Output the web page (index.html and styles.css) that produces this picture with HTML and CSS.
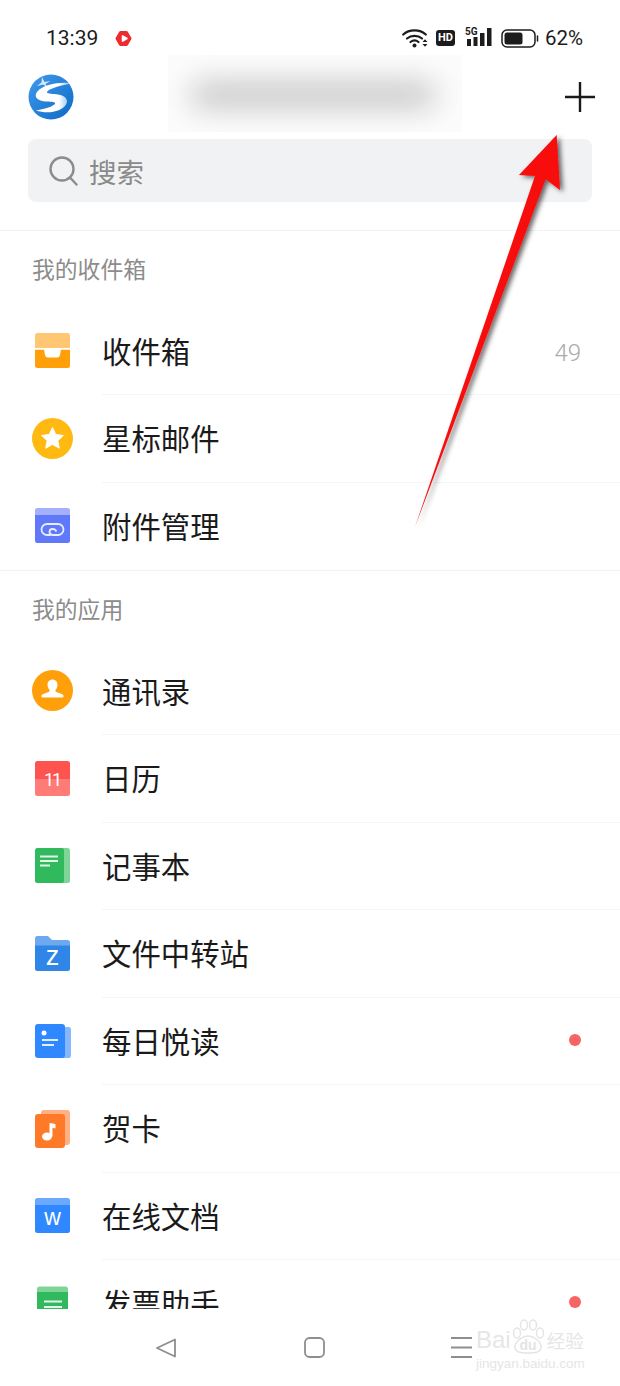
FILE: index.html

```html
<!DOCTYPE html>
<html lang="zh-CN">
<head>
    <meta charset="UTF-8">
    <meta name="viewport" content="width=device-width, initial-scale=1.0">
    <title>邮箱</title>
    <link rel="stylesheet" href="styles.css">
</head>
<body>
    <div class="page">
        <div class="status-bar">
            <span class="time">13:39</span>
            <svg class="status-video" width="17" height="17" viewBox="0 0 17 17">
                <path d="M5.500 2.500h6l3.500 6-3.500 6h-6L2 8.500z" fill="#ee2b2f" stroke="#ee2b2f" stroke-width="3" stroke-linejoin="round"/>
                <path d="M7.500 5.800l4.500 2.700-4.500 2.700z" fill="#fff" stroke="#fff" stroke-width="1.500" stroke-linejoin="round"/>
            </svg>
            <div class="status-right">
                <svg width="26" height="20" viewBox="0 0 26 20">
                    <path d="M1.200 6.500C7 1 18 1 23.800 6.500M5 10.500C9 7 16 7 20 10.500M8.500 14c2.500-2 5.500-2 8 0" fill="none" stroke="#1c1c1c" stroke-width="2.200" stroke-linecap="round"/>
                    <circle cx="12.500" cy="17.500" r="2" fill="#1c1c1c"/>
                    <path d="M20.500 14l2.500-2.800 2.500 2.800zM20.500 16l2.500 2.800 2.500-2.800z" fill="#1c1c1c"/>
                </svg>
                <span class="hd">HD</span>
                <div class="signal">
                    <span class="signal-5g">5G</span>
                    <svg class="signal-bars" width="27" height="19" viewBox="0 0 27 19">
                        <rect x="2" y="11" width="4" height="7" fill="#1c1c1c"/>
                        <rect x="8.500" y="9" width="4" height="9" fill="#1c1c1c"/>
                        <rect x="15" y="5" width="4.500" height="13" fill="#1c1c1c"/>
                        <rect x="22" y="0" width="4.500" height="18" fill="#1c1c1c"/>
                    </svg>
                </div>
                <svg class="battery" width="38" height="19" viewBox="0 0 38 19">
                    <rect x="1" y="1" width="33" height="17" rx="5" fill="none" stroke="#1c1c1c" stroke-width="1.500"/>
                    <rect x="3.500" y="3.500" width="18" height="12" rx="2.500" fill="#1c1c1c"/>
                    <path d="M36.500 7v5" stroke="#1c1c1c" stroke-width="1.500" stroke-linecap="round"/>
                </svg>
                <span class="battery-text">62%</span>
            </div>
        </div>

        <div class="header">
            <svg class="logo" width="46" height="46" viewBox="0 0 46 46">
                <defs>
                    <linearGradient id="logoBlue" x1="0" y1="0" x2="1" y2="1">
                        <stop offset="0" stop-color="#3f9bec"/>
                        <stop offset="1" stop-color="#0f69c4"/>
                    </linearGradient>
                    <linearGradient id="logoSwoosh" x1="0" y1="0" x2="1" y2="0">
                        <stop offset="0" stop-color="#fff"/>
                        <stop offset=".7" stop-color="#fff"/>
                        <stop offset="1" stop-color="#8cc4f4"/>
                    </linearGradient>
                </defs>
                <circle cx="23" cy="23" r="22.500" fill="url(#logoBlue)"/>
                <path d="M41 9C30 8 14 11 9 18c-4 6 2 9 9 9.500 4 .3 8 .3 9 1.500 1 1.500-5 5-19 7.500 12 4 26 1 30-6 3-5-1-9-8-10-5-.7-10-.5-11-2-1-2 8-6 22-8.500z" fill="url(#logoSwoosh)"/>
                <path d="M14 3l2.500 5 6-1-5 3 1.500 3-4-2.500-6 1.500 4.500-3.500z" fill="#fff" opacity=".8"/>
            </svg>
            <div class="account-name"><div class="account-smudge"></div></div>
            <svg class="add-btn" width="30" height="30" viewBox="0 0 30 30">
                <path d="M15 0v30M0 15h30" stroke="#1a1a1a" stroke-width="2.400"/>
            </svg>
        </div>

        <div class="search-wrap">
            <div class="search">
                <svg width="29" height="30" viewBox="0 0 29 30">
                    <circle cx="13" cy="13" r="11.500" fill="none" stroke="#8c8c8c" stroke-width="2.400"/>
                    <path d="M21 21.500l6.500 7" stroke="#8c8c8c" stroke-width="2.400" stroke-linecap="round"/>
                </svg>
                <span>搜索</span>
            </div>
        </div>

        <div class="content">
            <div class="section">
                <div class="section-title">我的收件箱</div>
                <div class="row">
                    <svg class="row-icon" width="41" height="41" viewBox="0 0 41 41">
                        <path d="M3 18V5.500A2.500 2.500 0 0 1 5.500 3h30A2.500 2.500 0 0 1 38 5.500V18z" fill="#ffc774"/>
                        <path d="M3 19.500h35v16a2.500 2.500 0 0 1-2.500 2.500h-30A2.500 2.500 0 0 1 3 35.500z" fill="#ff9f0a"/>
                        <path d="M3 18h35v1.500H29l-1 5.500q-.5 2.500-3 2.500h-9q-2.500 0-3-2.500l-1-5.500H3z" fill="#fff"/>
                    </svg>
                    <div class="row-body"><span class="row-label">收件箱</span><span class="row-count">49</span></div>
                </div>
                <div class="row">
                    <svg class="row-icon" width="41" height="41" viewBox="0 0 41 41">
                        <circle cx="20.500" cy="20.500" r="20.500" fill="#ffb910"/>
                        <path d="M20.500 9.500l3.300 7 7.600 1-5.600 5.200 1.500 7.500-6.800-3.800-6.800 3.800 1.500-7.500-5.600-5.200 7.600-1z" fill="#fff" stroke="#fff" stroke-linejoin="round"/>
                    </svg>
                    <div class="row-body"><span class="row-label">星标邮件</span></div>
                </div>
                <div class="row">
                    <svg class="row-icon" width="41" height="41" viewBox="0 0 41 41">
                        <path d="M3 12V5.500A2.500 2.500 0 0 1 5.500 3h30A2.500 2.500 0 0 1 38 5.500V12z" fill="#a5b0fd"/>
                        <path d="M3 10h35v25.500a2.500 2.500 0 0 1-2.500 2.500h-30A2.500 2.500 0 0 1 3 35.500z" fill="#6079fb"/>
                        <path d="M18 30h-3a5.500 5.500 0 0 1 0-11h11a5.500 5.500 0 0 1 0 11h-5q-3.500 0-3.500-3t3-3 3.500 2" fill="none" stroke="#e8ecff" stroke-width="1.800" stroke-linecap="round"/>
                    </svg>
                    <div class="row-body row-last"><span class="row-label">附件管理</span></div>
                </div>
            </div>

            <div class="section">
                <div class="section-title">我的应用</div>
                <div class="row">
                    <svg class="row-icon" width="41" height="41" viewBox="0 0 41 41">
                        <circle cx="20.500" cy="20.500" r="20.500" fill="#ff9f0a"/>
                        <path d="M20.500 9.500c3 0 5 2.300 5 5.200 0 2.300-1 4-2 5.100v1.400c0 1.200 6.800 1.800 8 4.300.5 1.100-.2 2-1.300 2H10.800c-1.100 0-1.800-.9-1.300-2 1.200-2.500 8-3.100 8-4.300v-1.400c-1-1.100-2-2.800-2-5.100 0-2.900 2-5.200 5-5.200z" fill="#fff"/>
                    </svg>
                    <div class="row-body"><span class="row-label">通讯录</span></div>
                </div>
                <div class="row">
                    <svg class="row-icon" width="41" height="41" viewBox="0 0 41 41">
                        <path d="M3 21V5.500A2.500 2.500 0 0 1 5.500 3h30A2.500 2.500 0 0 1 38 5.500V21z" fill="#ff5350"/>
                        <path d="M3 21h35v14.500a2.500 2.500 0 0 1-2.500 2.500h-30A2.500 2.500 0 0 1 3 35.500z" fill="#ff7b78"/>
                        <text class="icon-number" x="20" y="28" text-anchor="middle">11</text>
                    </svg>
                    <div class="row-body"><span class="row-label">日历</span></div>
                </div>
                <div class="row">
                    <svg class="row-icon" width="41" height="41" viewBox="0 0 41 41">
                        <rect x="20" y="3" width="18" height="35" rx="2.500" fill="#7fd596"/>
                        <rect x="3" y="3" width="29" height="35" rx="2.500" fill="#30b95d"/>
                        <path d="M8 11.500h18M8 16h18M8 20.500h10" stroke="#e3f6e9" stroke-width="2"/>
                    </svg>
                    <div class="row-body"><span class="row-label">记事本</span></div>
                </div>
                <div class="row">
                    <svg class="row-icon" width="41" height="41" viewBox="0 0 41 41">
                        <path d="M3 14V5.500A2.500 2.500 0 0 1 5.500 3H16l4 4h15.500A2.500 2.500 0 0 1 38 9.500V14z" fill="#6ea9ef"/>
                        <path d="M3 12.500h35v23a2.500 2.500 0 0 1-2.500 2.500h-30A2.500 2.500 0 0 1 3 35.500z" fill="#2f86e6"/>
                        <text class="icon-letter icon-letter-z" x="20.500" y="31.500" text-anchor="middle">z</text>
                    </svg>
                    <div class="row-body"><span class="row-label">文件中转站</span></div>
                </div>
                <div class="row">
                    <svg class="row-icon" width="41" height="41" viewBox="0 0 41 41">
                        <rect x="25" y="7" width="14" height="31" rx="2.500" fill="#86b7ff"/>
                        <rect x="3" y="4" width="30" height="34" rx="3" fill="#2f88ff"/>
                        <circle cx="12" cy="13" r="2.500" fill="#fff"/>
                        <path d="M10 20h16M10 25h12" stroke="#e3efff" stroke-width="1.800"/>
                    </svg>
                    <div class="row-body"><span class="row-label">每日悦读</span><span class="row-dot"></span></div>
                </div>
                <div class="row">
                    <svg class="row-icon" width="41" height="41" viewBox="0 0 41 41">
                        <rect x="9" y="2" width="29" height="35" rx="3" fill="#ffb184"/>
                        <rect x="3" y="6" width="30" height="34" rx="3" fill="#ff7a28"/>
                        <ellipse cx="15" cy="28.500" rx="5" ry="4" fill="#fff"/>
                        <path d="M17.500 28.500V15q4 .5 6 1.200v4.300q-2-.6-3-.8v8.800z" fill="#fff"/>
                    </svg>
                    <div class="row-body"><span class="row-label">贺卡</span></div>
                </div>
                <div class="row">
                    <svg class="row-icon" width="41" height="41" viewBox="0 0 41 41">
                        <path d="M3 12V5.500A2.500 2.500 0 0 1 5.500 3h30A2.500 2.500 0 0 1 38 5.500V12z" fill="#6aa9ff"/>
                        <path d="M3 10h35v25.500a2.500 2.500 0 0 1-2.500 2.500h-30A2.500 2.500 0 0 1 3 35.500z" fill="#2f88ff"/>
                        <text class="icon-letter" x="20.500" y="30" text-anchor="middle">w</text>
                    </svg>
                    <div class="row-body"><span class="row-label">在线文档</span></div>
                </div>
                <div class="row">
                    <svg class="row-icon" width="41" height="41" viewBox="0 0 41 41">
                        <path d="M5 12V6a2.500 2.500 0 0 1 2.500-2.500h26A2.500 2.500 0 0 1 36 6v6z" fill="#7fd596"/>
                        <path d="M5 9h31v29H5z" fill="#30b95d"/>
                        <path d="M12 18.500h18M12 24h18" stroke="#e3f6e9" stroke-width="1.800"/>
                    </svg>
                    <div class="row-body"><span class="row-label">发票助手</span><span class="row-dot"></span></div>
                </div>
            </div>
        </div>

        <div class="nav-bar">
            <svg width="20" height="20" viewBox="0 0 20 20">
                <path d="M19 1.500v17L1 10z" fill="none" stroke="#8e8e8e" stroke-width="1.800" stroke-linejoin="round"/>
            </svg>
            <svg width="21" height="21" viewBox="0 0 21 21">
                <rect x="1" y="1" width="19" height="19" rx="4.500" fill="none" stroke="#8e8e8e" stroke-width="1.800"/>
            </svg>
            <svg class="nav-menu" width="21" height="21" viewBox="0 0 21 21">
                <path d="M0 1h21M0 10.500h21M0 20h21" stroke="#8e8e8e" stroke-width="1.800"/>
            </svg>
        </div>

        <!-- watermark and red arrow lie over the page -->
        <div class="watermark">
            <div class="watermark-top">
                <span>Bai</span>
                <svg width="34" height="35" viewBox="0 0 34 35">
                    <g fill="none" stroke="#e4e4e4" stroke-width="1.400">
                        <ellipse cx="6" cy="14" rx="3.500" ry="5"/>
                        <ellipse cx="13" cy="6" rx="3.500" ry="5"/>
                        <ellipse cx="22" cy="6" rx="3.500" ry="5"/>
                        <ellipse cx="29" cy="14" rx="3.500" ry="5"/>
                        <path d="M4 28c0-6 8-11 13-11s13 5 13 11-7 6-13 6-13 0-13-6z"/>
                    </g>
                    <text class="watermark-du" x="17" y="31" text-anchor="middle">du</text>
                </svg>
                <span class="watermark-cn">经验</span>
            </div>
            <div class="watermark-url">jingyan.baidu.com</div>
        </div>

        <svg class="arrow" width="620" height="600" viewBox="0 0 620 600">
            <defs>
                <filter id="arrowShadow" x="-30%" y="-10%" width="160%" height="120%">
                    <feDropShadow dx="3" dy="2" stdDeviation="2.500" flood-color="#000" flood-opacity=".6"/>
                </filter>
            </defs>
            <path d="M556.700 135L519 175 535 176 415 527 545.700 179.300 560 190z" fill="#f80a0c" filter="url(#arrowShadow)"/>
        </svg>
    </div>
</body>
</html>
```

FILE: styles.css

```css
* {
    margin: 0;
    padding: 0;
    box-sizing: border-box;
}

body {
    background-color: #fff;
    color: #1a1a1a;
    font-family: "Noto Sans CJK SC", Roboto, sans-serif;
}

.page {
    position: relative;
    width: 620px;
    height: 1386px;
    display: flex;
    flex-direction: column;
    overflow: hidden;
}

.status-bar {
    height: 55px;
    padding: 21px 37px 0 46px;
    display: flex;
    align-items: flex-start;
    font-family: Roboto, sans-serif;
    color: #1c1c1c;
}

.time {
    font-size: 21px;
    line-height: 34px;
}

.status-video {
    margin: 9px 0 0 17px;
}

.status-right {
    margin-left: auto;
    display: flex;
    align-items: center;
    height: 34px;
}

.hd {
    margin-left: 8px;
    width: 19px;
    height: 16px;
    background-color: #1c1c1c;
    border-radius: 3px;
    color: #fff;
    font-size: 11px;
    font-weight: 700;
    line-height: 16px;
    text-align: center;
}

.signal {
    position: relative;
    margin-left: 10px;
    width: 27px;
    height: 25px;
}

.signal-5g {
    position: absolute;
    left: 0;
    top: 1px;
    font-size: 10px;
    font-weight: 700;
    line-height: 10px;
}

.signal-bars {
    display: block;
    margin-top: 2px;
}

.battery {
    margin-left: 9px;
}

.battery-text {
    margin-left: 6px;
    font-size: 20.5px;
}

.header {
    height: 77px;
    padding: 7px 25px 0 28px;
    display: flex;
    align-items: center;
}

.account-name {
    align-self: flex-start;
    margin: -7px 0 0 94px;
    width: 294px;
    height: 77px;
    background-color: #fcfcfc;
    overflow: hidden;
}

.account-smudge {
    margin: 28px 0 0 22px;
    width: 246px;
    height: 24px;
    background-color: #c0c0c0;
    border-radius: 12px;
    filter: blur(15px);
}

.add-btn {
    margin-left: auto;
}

.search-wrap {
    padding: 7px 28px 28px;
}

.search {
    height: 63px;
    padding-left: 21px;
    background-color: #f1f2f4;
    border-radius: 8px;
    display: flex;
    align-items: center;
    gap: 11px;
    color: #8a8a8a;
    font-size: 27.5px;
}

.content {
    height: 1079px;
    overflow: hidden;
}

.section {
    border-top: 1px solid #f3f3f3;
}

.section-title {
    height: 76.5px;
    padding: 0 0 2px 32px;
    display: flex;
    align-items: center;
    color: #8c8c8c;
    font-size: 22.8px;
}

.row {
    height: 87.5px;
    padding-left: 32px;
    display: flex;
    align-items: center;
}

.row-icon {
    margin-top: -1px;
    flex: none;
}

.row-body {
    margin-left: 29px;
    padding-right: 39px;
    height: 100%;
    flex: 1;
    display: flex;
    align-items: center;
    justify-content: space-between;
    border-bottom: 1px solid #f5f5f5;
}

.row-last {
    border-bottom: none;
}

.row-label {
    margin-top: -2px;
    font-size: 29.4px;
}

.row-count {
    margin-top: 4px;
    color: #aaa;
    font-family: Roboto, sans-serif;
    font-size: 24px;
    font-weight: 300;
}

.row-dot {
    margin-top: -2px;
    width: 12px;
    height: 12px;
    background-color: #f66466;
    border-radius: 50%;
}

.icon-number {
    fill: #fff;
    font-family: Roboto, sans-serif;
    font-size: 18px;
    letter-spacing: -2px;
}

.icon-letter {
    fill: #fff;
    font-family: "Liberation Sans", sans-serif;
    font-size: 23px;
}

.icon-letter-z {
    font-size: 27px;
}

.nav-bar {
    flex: 1;
    padding-left: 156px;
    display: flex;
    align-items: center;
    gap: 128px;
}

.nav-menu {
    margin-left: -2px;
}

.watermark {
    position: absolute;
    left: 476px;
    top: 1319px;
    width: 112px;
    color: #e6e6e6;
    font-family: "Liberation Sans", sans-serif;
}

.watermark-top {
    display: flex;
    align-items: flex-end;
    font-size: 24px;
    line-height: 28px;
    white-space: nowrap;
}

.watermark-du {
    fill: #e4e4e4;
    font-size: 14px;
    font-weight: 700;
}

.watermark-cn {
    flex: none;
    margin-left: 2px;
    font-family: "Noto Sans CJK SC", sans-serif;
    font-size: 18.5px;
}

.watermark-url {
    margin-top: 2px;
    font-size: 13.5px;
    line-height: 16px;
    white-space: nowrap;
}

.arrow {
    position: absolute;
    left: 0;
    top: 0;
    pointer-events: none;
}
```
